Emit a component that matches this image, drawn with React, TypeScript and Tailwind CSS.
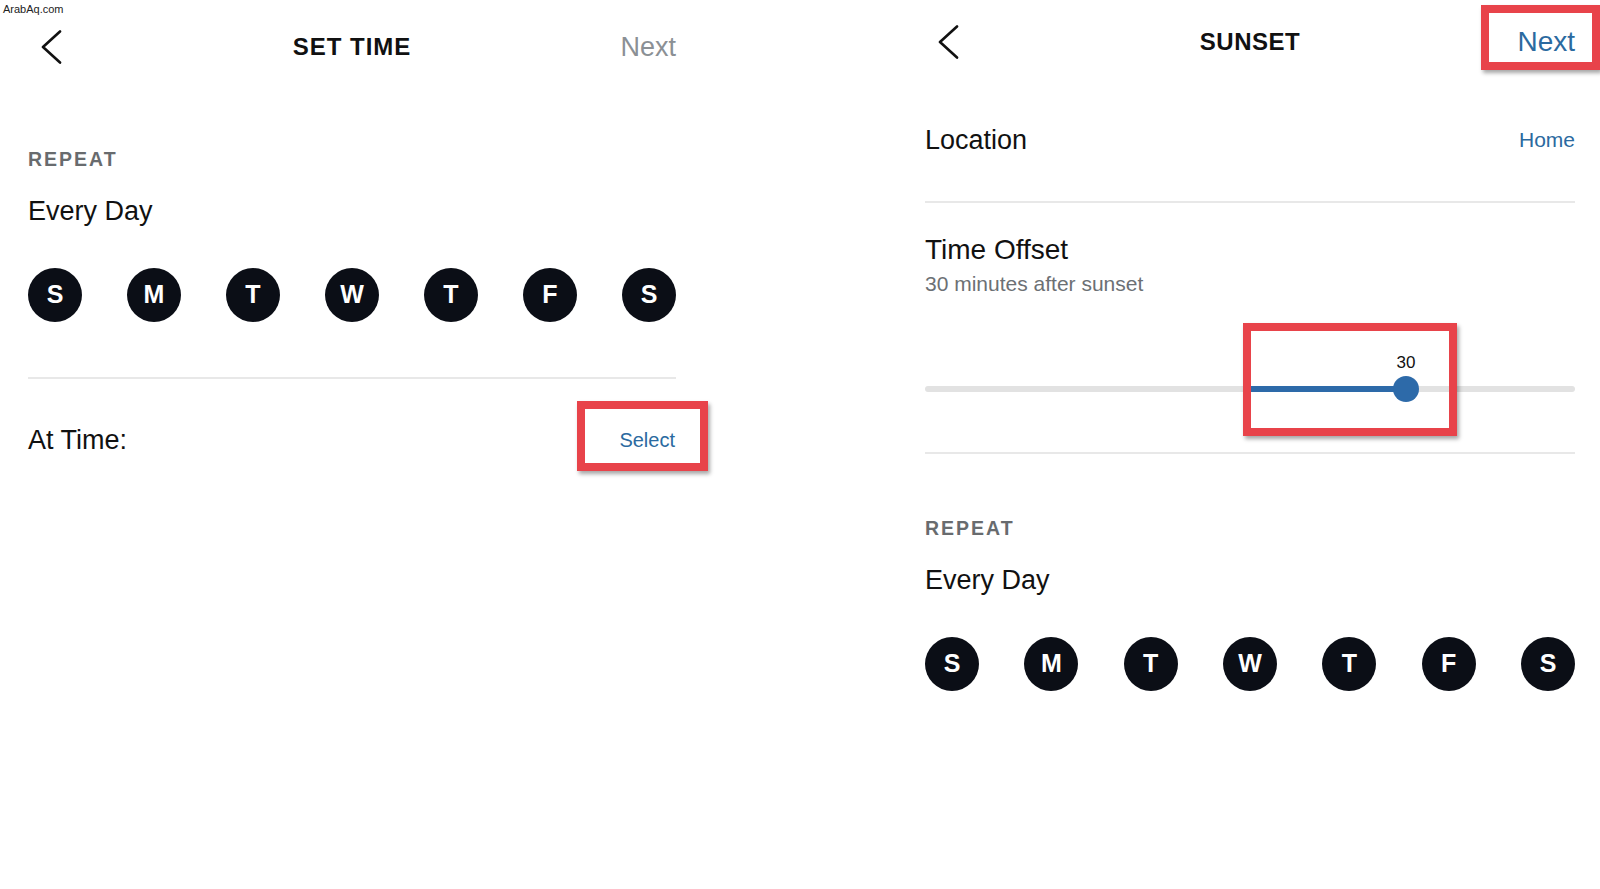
import React from 'react'

const days = ['S', 'M', 'T', 'W', 'T', 'F', 'S']

const Chevron: React.FC = () => (
  <svg width="22" height="34" viewBox="0 0 22 34" fill="none">
    <path d="M20 1.5 L3 17 L20 32.5" stroke="#111" strokeWidth="2.6" strokeLinecap="round" strokeLinejoin="round" />
  </svg>
)

const DayCircles: React.FC = () => (
  <div className="flex justify-between">
    {days.map((d, i) => (
      <div
        key={i}
        className="w-[54px] h-[54px] rounded-full bg-[#0b0e16] text-white flex items-center justify-center text-[25px] font-bold"
      >
        {d}
      </div>
    ))}
  </div>
)

const RedBox: React.FC<{ className: string }> = ({ className }) => (
  <div className={`absolute border-[8px] border-[#e8434a] shadow-[2px_3px_4px_rgba(0,0,0,0.35)] ${className}`} />
)

const OffsetSlider: React.FC<{ value: number; min: number; max: number }> = ({ value, min, max }) => {
  const frac = (value - min) / (max - min)
  const thumb = `calc(13px + (100% - 26px) * ${frac})`
  const mid = `calc(13px + (100% - 26px) * 0.5)`
  return (
    <div className="relative h-[60px] mt-[53px]">
      <div className="absolute left-0 right-0 top-[36px] h-[6px] rounded-full bg-[#e2e2e2]" />
      <div
        className="absolute top-[36px] h-[6px] bg-[#2d6aa9]"
        style={{ left: mid, width: `calc(${thumb} - ${mid})` }}
      />
      <div
        className="absolute top-[26px] w-[26px] h-[26px] -ml-[13px] rounded-full bg-[#2d6aa9]"
        style={{ left: thumb }}
      />
      <div
        className="absolute top-[3px] w-[40px] -ml-[20px] text-center text-[17px] leading-[20px] text-[#111]"
        style={{ left: thumb }}
      >
        {value}
      </div>
    </div>
  )
}

const App: React.FC = () => {
  return (
    <div className="relative w-[1600px] h-[889px] bg-white overflow-hidden font-['Liberation_Sans',Arial,sans-serif] text-[#111]">
      {/* watermark */}
      <div className="absolute left-[3px] top-[3px] text-[11px] leading-[13px] text-[#222]">ArabAq.com</div>

      <div className="flex">
        {/* Set time screen */}
        <div className="w-[704px] px-[28px] flex flex-col">
          <div className="grid grid-cols-3 items-center h-[94px]">
            <div className="pl-[12px]">
              <Chevron />
            </div>
            <div className="justify-self-center text-[24px] font-bold tracking-[1px]">SET TIME</div>
            <div className="justify-self-end text-[27px] text-[#8b9095]">Next</div>
          </div>

          <div className="mt-[53px] text-[19.5px] leading-[24px] font-bold tracking-[2px] text-[#686b6e]">REPEAT</div>
          <div className="mt-[24px] text-[27px] leading-[32px]">Every Day</div>
          <div className="mt-[41px]">
            <DayCircles />
          </div>

          <div className="mt-[55px] h-[2px] bg-[#e8e8e8]" />

          <div className="mt-[45px] flex items-center justify-between leading-[32px]">
            <span className="text-[27px]">At Time:</span>
            <span className="text-[20px] text-[#2b6aa0] pr-[1px]">Select</span>
          </div>
        </div>

        <div className="w-[193px]" />

        {/* Sunset screen */}
        <div className="w-[703px] pl-[28px] pr-[25px] flex flex-col">
          <div className="grid grid-cols-3 items-center h-[84px]">
            <div className="pl-[12px]">
              <Chevron />
            </div>
            <div className="justify-self-center text-[24px] font-bold tracking-[0.5px]">SUNSET</div>
            <div className="justify-self-end text-[28px] text-[#2b6aa0]">Next</div>
          </div>

          <div className="mt-[40px] flex items-center justify-between leading-[32px]">
            <span className="text-[27px]">Location</span>
            <span className="text-[21px] text-[#2b6aa0]">Home</span>
          </div>

          <div className="mt-[45px] h-[2px] bg-[#e8e8e8]" />

          <div className="mt-[31px] text-[28px] leading-[32px]">Time Offset</div>
          <div className="mt-[5px] text-[21px] leading-[26px] text-[#6c7074]">30 minutes after sunset</div>

          <OffsetSlider value={30} min={-60} max={60} />

          <div className="mt-[42px] h-[2px] bg-[#e8e8e8]" />

          <div className="mt-[62px] text-[19.5px] leading-[24px] font-bold tracking-[2px] text-[#686b6e]">REPEAT</div>
          <div className="mt-[24px] text-[27px] leading-[32px]">Every Day</div>
          <div className="mt-[41px]">
            <DayCircles />
          </div>
        </div>
      </div>

      {/* annotation boxes */}
      <RedBox className="left-[577px] top-[401px] w-[131px] h-[70px]" />
      <RedBox className="left-[1243px] top-[323px] w-[214px] h-[113px]" />
      <RedBox className="left-[1481px] top-[5px] w-[119px] h-[65px]" />
    </div>
  )
}

export default App
